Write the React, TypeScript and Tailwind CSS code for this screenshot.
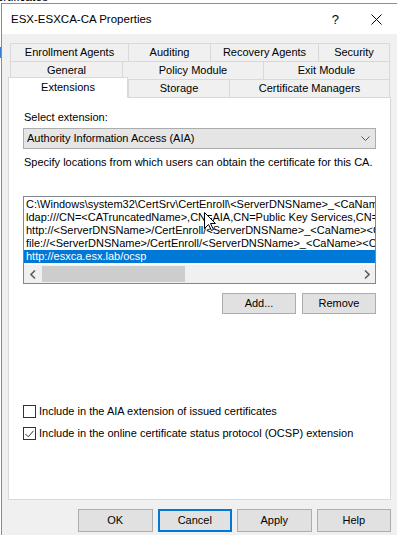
const rows = [
  "C:\\Windows\\system32\\CertSrv\\CertEnroll\\<ServerDNSName>_<CaName><CertificateName>.crt",
  "ldap:///CN=<CATruncatedName>,CN=AIA,CN=Public Key Services,CN=Services,<ConfigurationContainer><CAObjectClass>",
  "http://<ServerDNSName>/CertEnroll/<ServerDNSName>_<CaName><CertificateName>.crt",
  "file://<ServerDNSName>/CertEnroll/<ServerDNSName>_<CaName><CertificateName>.crt",
];

function Tab({ label, w, last }: { label: string; w: string; last?: boolean }) {
  return (
    <div
      className={`flex h-full items-center justify-center border-l border-t border-[#d9d9d9] ${w} ${last ? "border-r" : ""}`}
    >
      {label}
    </div>
  );
}

function Button({ label, focused, w = "w-[75px]" }: { label: string; focused?: boolean; w?: string }) {
  return (
    <div
      className={`flex items-center justify-center bg-[#e1e1e1] ${w} ${
        focused ? "border-2 border-[#0078d7]" : "border border-[#adadad]"
      }`}
    >
      {label}
    </div>
  );
}

export default function App() {
  return (
    <div className="relative h-[535px] w-[397px] overflow-hidden bg-white font-['Liberation_Sans',Arial,sans-serif] text-[11px] leading-[13px] text-black">
      {/* window behind the dialog */}
      <div className="h-[3px] overflow-hidden">
        <p className="-ml-[12px] -mt-[9px] text-[12px] leading-[12px]">Certificates</p>
      </div>

      <div className="flex h-[532px]">
        <div className="w-[1px] pt-[44px]">
          <div className="h-[11px] bg-[#3a7bd5]" />
        </div>

        <div className="flex min-w-0 flex-1 flex-col border-l border-t border-[#8c8c8c] bg-[#f0f0f0]">
          {/* title bar */}
          <div className="flex h-[30px] items-center bg-white pl-[9px] pr-[15px]">
            <span className="text-[11.5px]">ESX-ESXCA-CA Properties</span>
            <span className="ml-auto text-[13px]">?</span>
            <svg className="ml-[32px]" width="11" height="11" viewBox="0 0 11 11">
              <path d="M0.5 0.5 L10.5 10.5 M10.5 0.5 L0.5 10.5" stroke="#000" strokeWidth="1" />
            </svg>
          </div>

          <div className="flex flex-col px-[6px] pt-[9px]">
            {/* tab strip */}
            <div className="ml-[2px] flex w-[380px] flex-col">
              <div className="flex h-[18px]">
                <Tab label="Enrollment Agents" w="w-[118px]" />
                <Tab label="Auditing" w="w-[82px]" />
                <Tab label="Recovery Agents" w="w-[108px]" />
                <Tab label="Security" w="w-[72px]" last />
              </div>
              <div className="flex h-[18px]">
                <Tab label="General" w="w-[112px]" />
                <Tab label="Policy Module" w="w-[141px]" />
                <Tab label="Exit Module" w="w-[127px]" last />
              </div>
              <div className="-ml-[2px] flex h-[18px]">
                <div className="relative z-10 -mt-[2px] flex h-[21px] w-[120px] items-center justify-center border-l border-r border-t border-[#d9d9d9] bg-white pb-[1px]">
                  Extensions
                </div>
                <Tab label="Storage" w="w-[101px]" />
                <Tab label="Certificate Managers" w="w-[161px]" last />
              </div>
            </div>

            {/* tab page */}
            <div className="flex h-[403px] w-[383px] flex-col border border-[#d9d9d9] bg-white px-[14px]">
              <p className="mt-[13px] pl-[1px]">Select extension:</p>
              <div className="mt-[4px] flex h-[21px] items-center border border-[#acacac] bg-[#e5e5e5] pl-[3px] pr-[5px]">
                <span>Authority Information Access (AIA)</span>
                <svg className="ml-auto" width="9" height="5" viewBox="0 0 9 5">
                  <path d="M0.5 0.5 L4.5 4.5 L8.5 0.5" fill="none" stroke="#555" strokeWidth="1" />
                </svg>
              </div>
              <p className="mt-[7px] pl-[1px]">Specify locations from which users can obtain the certificate for this CA.</p>

              {/* list */}
              <div className="relative mt-[27px] flex h-[88px] flex-col overflow-hidden border border-[#828790] pt-[1px]">
                {rows.map((r) => (
                  <div key={r} className="h-[13px] whitespace-nowrap pl-[2px]">
                    {r}
                  </div>
                ))}
                <div className="h-[13px] whitespace-nowrap bg-[#0078d7] pl-[2px] text-white">http://esxca.esx.lab/ocsp</div>
                <div className="mt-auto flex h-[18px] items-center bg-[#f0f0f0]">
                  <div className="flex h-full w-[18px] items-center justify-center">
                    <svg width="6" height="9" viewBox="0 0 6 9">
                      <path d="M5 0.5 L1 4.5 L5 8.5" fill="none" stroke="#606060" strokeWidth="1.6" />
                    </svg>
                  </div>
                  <div className="h-[16px] w-[143px] bg-[#cdcdcd]" />
                  <div className="ml-auto flex h-full w-[17px] items-center justify-center">
                    <svg width="6" height="9" viewBox="0 0 6 9">
                      <path d="M1 0.5 L5 4.5 L1 8.5" fill="none" stroke="#606060" strokeWidth="1.6" />
                    </svg>
                  </div>
                </div>
                <svg className="absolute left-[180px] top-[15px]" width="13" height="20" viewBox="0 0 13 20">
                  <path
                    d="M0.5 0.5 L0.5 16.5 L4.5 12.5 L7.5 18.5 L9.5 17.5 L6.5 11.5 L11.5 11.5 Z"
                    fill="#fff"
                    stroke="#000"
                    strokeWidth="1"
                  />
                </svg>
              </div>

              <div className="mt-[9px] flex h-[21px] justify-end gap-[6px]">
                <Button label="Add..." w="w-[74px]" />
                <Button label="Remove" w="w-[74px]" />
              </div>

              {/* options */}
              <div className="mt-[91px] flex flex-col gap-[9px]">
                <label className="flex items-center gap-[3px]">
                  <span className="h-[13px] w-[13px] border border-[#333] bg-white" />
                  <span>Include in the AIA extension of issued certificates</span>
                </label>
                <label className="flex items-center gap-[3px]">
                  <span className="flex h-[13px] w-[13px] items-center justify-center border border-[#333] bg-white">
                    <svg width="9" height="8" viewBox="0 0 9 8">
                      <path d="M0.5 4 L3.3 6.8 L8.5 0.8" fill="none" stroke="#333" strokeWidth="1" />
                    </svg>
                  </span>
                  <span>Include in the online certificate status protocol (OCSP) extension</span>
                </label>
              </div>
            </div>

            {/* dialog buttons */}
            <div className="ml-[70px] mt-[9px] flex h-[23px] gap-[5px]">
              <Button label="OK" />
              <Button label="Cancel" focused />
              <Button label="Apply" />
              <Button label="Help" />
            </div>
          </div>
        </div>
      </div>
    </div>
  );
}
